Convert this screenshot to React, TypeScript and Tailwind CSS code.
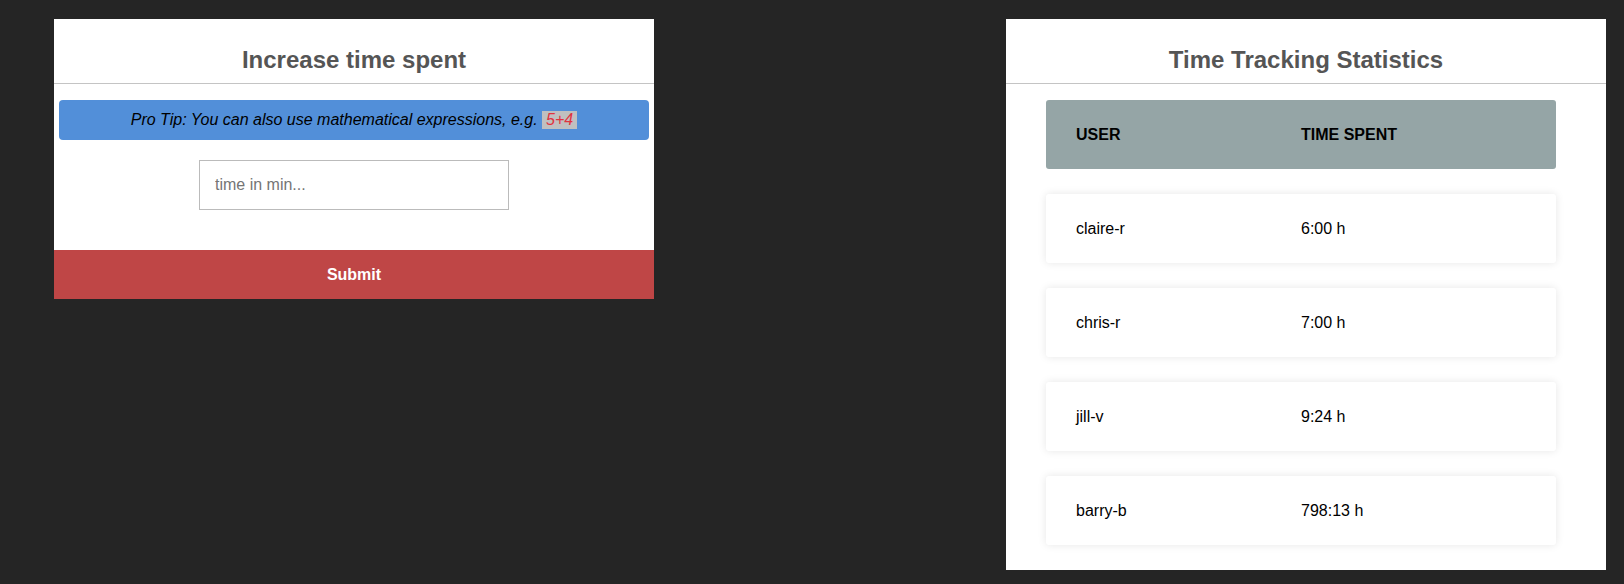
const rows = [
  { user: 'claire-r', time: '6:00 h' },
  { user: 'chris-r', time: '7:00 h' },
  { user: 'jill-v', time: '9:24 h' },
  { user: 'barry-b', time: '798:13 h' },
];

const App = () => {
  return (
    <div className="min-h-[584px] bg-[#252525] pt-[19px] pl-[54px] flex items-start gap-[352px] font-['Liberation_Sans',Arial,sans-serif]">
      {/* time input card */}
      <div className="w-[600px] bg-white">
        <h2 className="pt-[27px] pb-[9px] leading-[28px] text-center text-[24px] font-bold text-[#555] border-b border-[#c4c4c4]">
          Increase time spent
        </h2>
        <div className="px-[5px] pt-[16px]">
          <div className="h-[40px] rounded-[4px] bg-[#528fd9] flex items-center justify-center text-[16px] italic text-black">
            Pro Tip: You can also use mathematical expressions, e.g.&nbsp;
            <code className="bg-[#c0c0c0] text-[#e0333f] px-[4px] leading-[18px] italic font-['Liberation_Sans',Arial,sans-serif]">
              5+4
            </code>
          </div>
        </div>
        <div className="flex justify-center pt-[20px] pb-[40px]">
          <input
            type="text"
            placeholder="time in min..."
            className="w-[310px] h-[50px] border border-[#bbb] px-[15px] text-[16px] text-black placeholder:text-[#757575] outline-none"
          />
        </div>
        <button className="w-full h-[49px] bg-[#bf4646] text-white font-bold text-[16px]">
          Submit
        </button>
      </div>

      {/* statistics card */}
      <div className="w-[600px] bg-white pb-[25px]">
        <h2 className="pt-[27px] pb-[9px] leading-[28px] text-center text-[24px] font-bold text-[#555] border-b border-[#c4c4c4]">
          Time Tracking Statistics
        </h2>
        <ul className="pl-[40px] pr-[50px] pt-[16px] flex flex-col gap-[25px]">
          <li className="h-[69px] rounded-[3px] bg-[#95a5a6] flex items-center px-[30px] text-[16px] font-bold text-black uppercase">
            <div className="w-[225px]">User</div>
            <div>Time Spent</div>
          </li>
          {rows.map((row) => (
            <li
              key={row.user}
              className="h-[69px] rounded-[3px] bg-white shadow-[0_0_9px_0_rgba(0,0,0,0.1)] flex items-center px-[30px] text-[16px] text-black"
            >
              <div className="w-[225px]">{row.user}</div>
              <div>{row.time}</div>
            </li>
          ))}
        </ul>
      </div>
    </div>
  );
};

export default App;
